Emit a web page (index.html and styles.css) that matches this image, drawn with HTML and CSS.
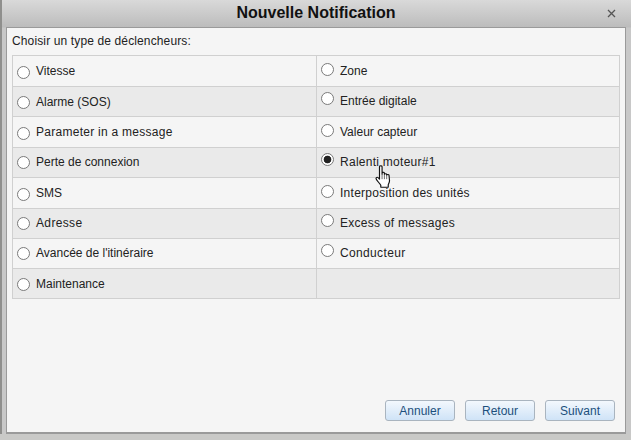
FILE: index.html
```html
<!DOCTYPE html>
<html lang="fr">
<head>
<meta charset="utf-8">
<title>Nouvelle Notification</title>
<link rel="stylesheet" href="styles.css">
</head>
<body>
<div class="dialog">
  <header class="titlebar">
    <h1 class="title">Nouvelle Notification</h1>
    <svg class="close" width="9" height="9" viewBox="0 0 9 9"><path d="M1 1l7 7M8 1l-7 7" stroke="#555" stroke-width="1.3" fill="none"/></svg>
  </header>
  <main class="content">
    <p class="prompt">Choisir un type de déclencheurs:</p>
    <div class="grid">
      <div class="cell"><span class="radio"></span><span>Vitesse</span></div>
      <div class="cell right"><span class="radio"></span><span>Zone</span></div>
      <div class="cell alt"><span class="radio"></span><span>Alarme (SOS)</span></div>
      <div class="cell alt right lift"><span class="radio"></span><span>Entrée digitale</span></div>
      <div class="cell"><span class="radio"></span><span class="wide">Parameter in a message</span></div>
      <div class="cell right"><span class="radio"></span><span>Valeur capteur</span></div>
      <div class="cell alt lift"><span class="radio"></span><span>Perte de connexion</span></div>
      <div class="cell alt right lift"><span class="radio checked"></span><span class="wide">Ralenti moteur#1</span></div>
      <div class="cell"><span class="radio"></span><span>SMS</span></div>
      <div class="cell right"><span class="radio"></span><span class="wide">Interposition des unités</span></div>
      <div class="cell alt lift"><span class="radio"></span><span class="wider">Adresse</span></div>
      <div class="cell alt right lift"><span class="radio"></span><span class="wide">Excess of messages</span></div>
      <div class="cell lift"><span class="radio"></span><span>Avancée de l'itinéraire</span></div>
      <div class="cell right lift"><span class="radio"></span><span class="wider">Conducteur</span></div>
      <div class="cell alt"><span class="radio"></span><span>Maintenance</span></div>
      <div class="cell alt right"></div>
    </div>
    <footer class="actions">
      <button class="btn">Annuler</button>
      <button class="btn">Retour</button>
      <button class="btn">Suivant</button>
    </footer>
  </main>
</div>
<svg class="cursor" width="18" height="24" viewBox="0 0 14 22" preserveAspectRatio="none">
  <path d="M3.500 1.500c0-1.200 2-1.200 2 0v7.200V7.500c0-1 1.800-1 1.800 0v1.200c0-1 1.800-1 1.800 0v.8c0-1 1.800-1 1.800 0l.4 5c0 1.500-.6 2.500-1 3.500v2.500H4.500v-2C3.500 16.500 1 14 .8 12.500c-.2-1.200 1-1.500 1.700-.8l1 1.300z" fill="#fff" stroke="#111" stroke-width=".9" stroke-linejoin="round"/>
  <path d="M5.500 9v4M7.300 9v4M9.100 9.500V13" stroke="#333" stroke-width=".6" fill="none"/>
</svg>
</body>
</html>
```

FILE: styles.css
```css
* { box-sizing: border-box; }
html, body { margin: 0; height: 440px; overflow: hidden; }
body {
  position: relative;
  width: 631px;
  background: #c9c9c7;
  font-family: "Liberation Sans", Arial, sans-serif;
}
.dialog {
  display: flex;
  flex-direction: column;
  height: 434px;
  padding: 0 5px 0 4px;
  background: linear-gradient(#d9d9d9 0, #bcbcbc 27px, #c8c8c8 28px, #c8c8c8 100%);
  border-left: 2px solid #8f8f8d;
}
.titlebar {
  position: relative;
  display: flex;
  justify-content: center;
  align-items: center;
  height: 27px;
  flex: none;
}
.title {
  margin: 0;
  font-size: 16px;
  font-weight: bold;
  color: #111;
  position: relative;
  top: -1px;
}
.close {
  position: absolute;
  right: 10px;
  top: 9px;
}
.content {
  flex: 1;
  display: flex;
  flex-direction: column;
  padding: 0 5px 11px 5px;
  background: #f5f5f5;
  border: 1px solid #9a9a9a;
  border-bottom-width: 2px;
}
.prompt {
  margin: 0;
  height: 27px;
  padding-top: 6px;
  font-size: 12px;
  line-height: 15px;
  letter-spacing: .13px;
  color: #222;
}
.grid {
  display: grid;
  grid-template-columns: 304px 303px;
  grid-template-rows: 31px 30px 31px 30px 31px 30px 30px 30px;
  border-top: 1px solid #d0d0d0;
  border-left: 1px solid #d0d0d0;
  width: 608px;
}
.cell {
  display: flex;
  align-items: center;
  gap: 6px;
  padding: 0 4px;
  font-size: 12px;
  color: #222;
  background: #f5f5f5;
  border-right: 1px solid #d0d0d0;
  border-bottom: 1px solid #d0d0d0;
}
.cell.alt { background: #eaeaea; }
.cell.lift { padding-bottom: 2px; }
.wide { letter-spacing: .27px; }
.wider { letter-spacing: .35px; }
.radio {
  flex: none;
  width: 13px;
  height: 13px;
  margin-top: 2px;
  border-radius: 50%;
  border: 1px solid #7a7a7a;
  background: #fff;
}
.right .radio { margin-top: -4px; }
.radio.checked {
  background: radial-gradient(circle, #222 0, #222 3.5px, #fff 4.2px);
}
.actions {
  margin-top: auto;
  display: flex;
  justify-content: flex-end;
  gap: 10px;
  padding-right: 5px;
}
.btn {
  width: 70px;
  height: 21px;
  padding: 0;
  font-family: inherit;
  font-size: 12px;
  color: #1c4f7c;
  background: linear-gradient(#f3f8fd, #cfe3f7);
  border: 1px solid #a9b4bf;
  border-radius: 3px;
}
.cursor {
  position: absolute;
  left: 375px;
  top: 165px;
}
```
